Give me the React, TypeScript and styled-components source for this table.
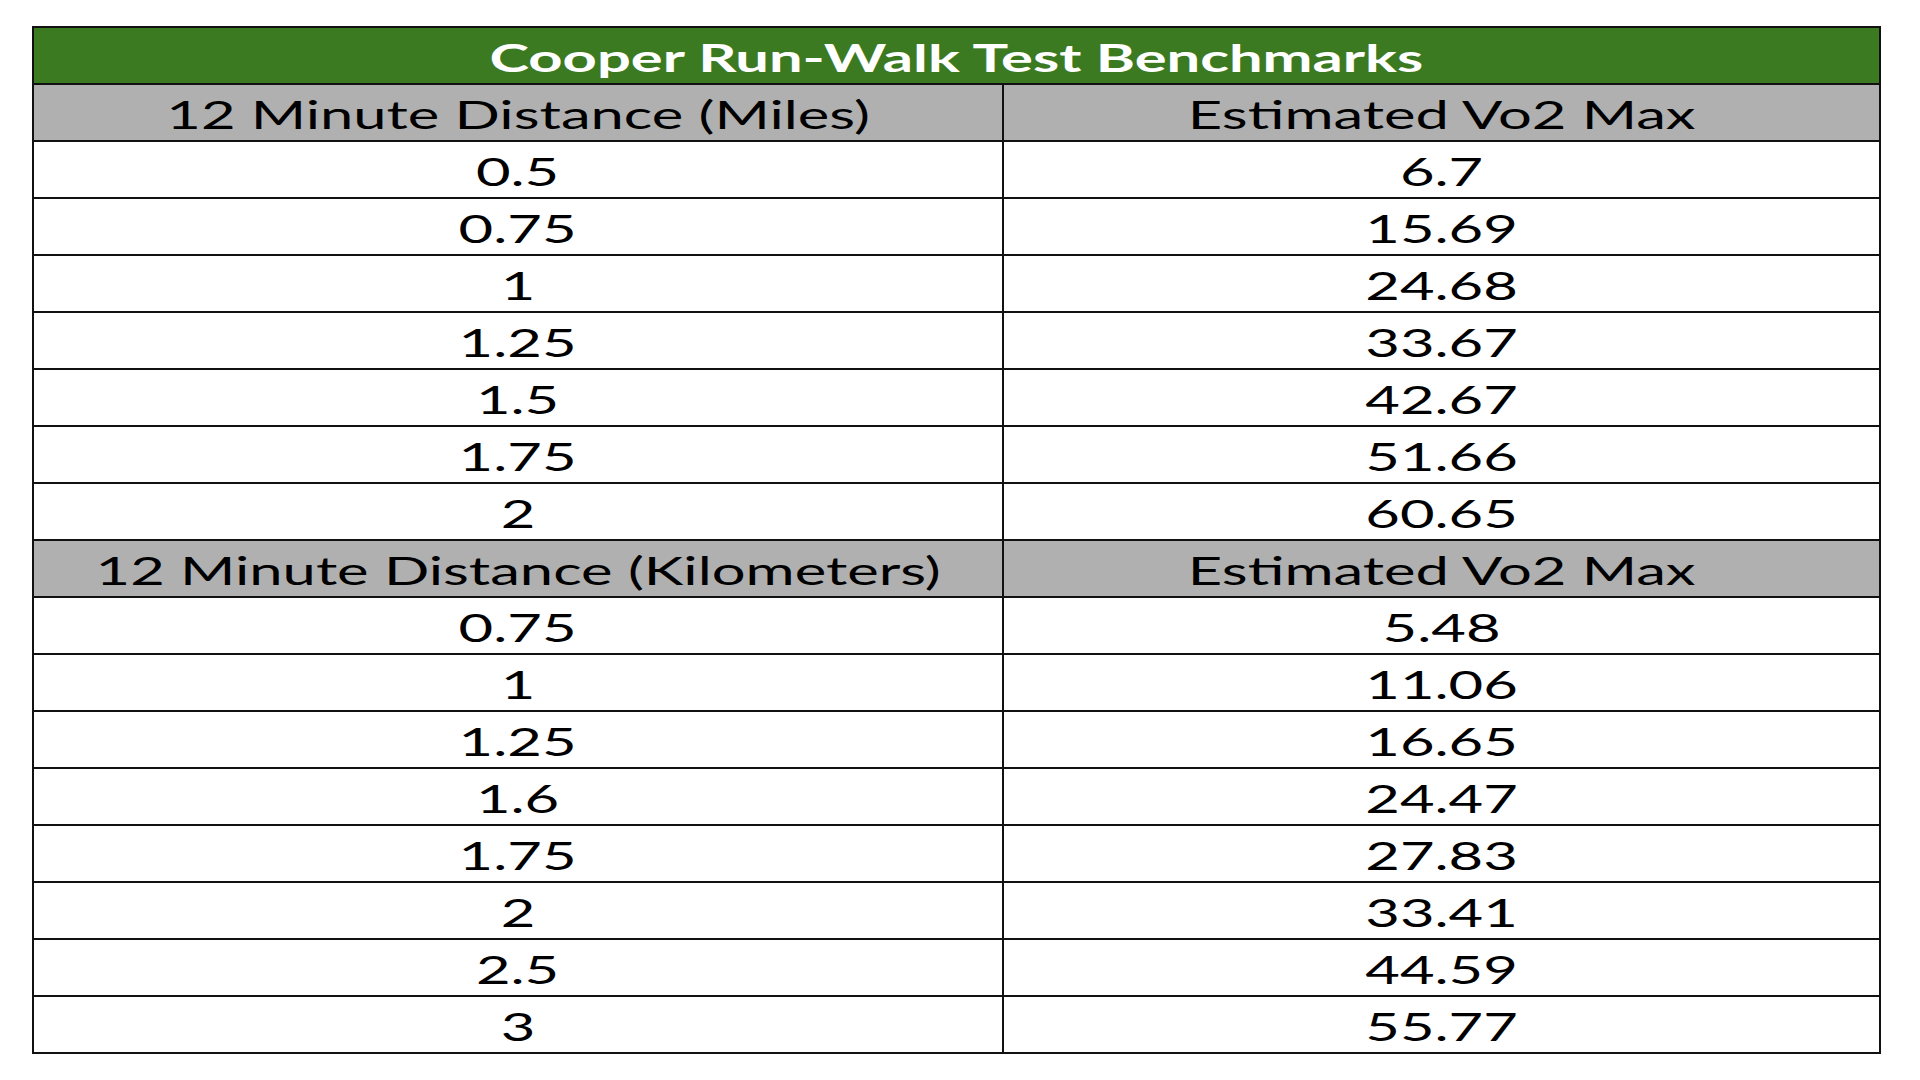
import styled, { createGlobalStyle } from "styled-components";

const GlobalStyle = createGlobalStyle`
  html, body {
    margin: 0;
    padding: 0;
    background: #ffffff;
  }
  body {
    font-family: "Lato", "Open Sans", sans-serif;
    color: #000;
  }
`;

const Page = styled.div`
  width: 1920px;
  height: 1080px;
  padding: 26px 0 0 32px;
  box-sizing: border-box;
  background: #fff;
`;

// grid with the outer top/left border on the container, each cell draws right/bottom
const Sheet = styled.div`
  display: grid;
  grid-template-columns: 970px 877px;
  grid-auto-rows: 57px;
  width: max-content;
  border-top: 2.5px solid #111;
  border-left: 2.5px solid #111;
`;

const Cell = styled.div<{ $kind?: "title" | "head" | "data" }>`
  display: flex;
  align-items: center;
  justify-content: center;
  box-sizing: border-box;
  padding-top: 3px;
  border-right: 2.5px solid #111;
  border-bottom: 2.5px solid #111;
  font-size: 38px;
  line-height: 1;
  white-space: nowrap;
  grid-column: ${(p) => (p.$kind === "title" ? "1 / span 2" : "auto")};
  font-weight: ${(p) => (p.$kind === "title" ? 700 : 400)};
  color: ${(p) => (p.$kind === "title" ? "#fff" : "#000")};
  background: ${(p) =>
    p.$kind === "title" ? "#3c7a22" : p.$kind === "head" ? "#b0b0b0" : "#fff"};
`;

// the reference type is a Calibri-like face stretched wide
const Stretch = styled.span`
  display: inline-block;
  transform: scaleX(1.57);
  transform-origin: center;
`;

const miles: [string, string][] = [
  ["0.5", "6.7"],
  ["0.75", "15.69"],
  ["1", "24.68"],
  ["1.25", "33.67"],
  ["1.5", "42.67"],
  ["1.75", "51.66"],
  ["2", "60.65"],
];

const kilometers: [string, string][] = [
  ["0.75", "5.48"],
  ["1", "11.06"],
  ["1.25", "16.65"],
  ["1.6", "24.47"],
  ["1.75", "27.83"],
  ["2", "33.41"],
  ["2.5", "44.59"],
  ["3", "55.77"],
];

const HeadRow = ({ unit }: { unit: string }) => (
  <>
    <Cell $kind="head">
      <Stretch>12 Minute Distance ({unit})</Stretch>
    </Cell>
    <Cell $kind="head">
      <Stretch>Estimated Vo2 Max</Stretch>
    </Cell>
  </>
);

const DataRows = ({ rows }: { rows: [string, string][] }) => (
  <>
    {rows.map(([dist, vo2]) => (
      <>
        <Cell key={`${dist}-d`}>
          <Stretch>{dist}</Stretch>
        </Cell>
        <Cell key={`${dist}-v`}>
          <Stretch>{vo2}</Stretch>
        </Cell>
      </>
    ))}
  </>
);

export default function App() {
  return (
    <>
      <GlobalStyle />
      <Page>
        <Sheet>
          <Cell $kind="title">
            <Stretch>Cooper Run-Walk Test Benchmarks</Stretch>
          </Cell>
          <HeadRow unit="Miles" />
          <DataRows rows={miles} />
          <HeadRow unit="Kilometers" />
          <DataRows rows={kilometers} />
        </Sheet>
      </Page>
    </>
  );
}
